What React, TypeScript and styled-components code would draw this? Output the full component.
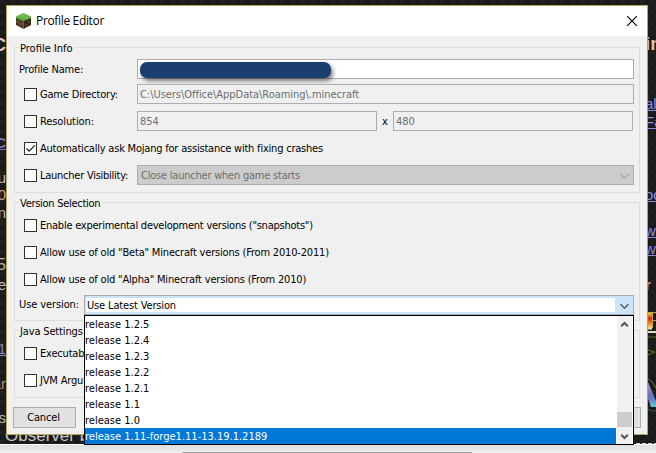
import React from "react";
import styled, { createGlobalStyle, css } from "styled-components";

const Global = createGlobalStyle`
  *, *::before, *::after { box-sizing: border-box; }
  body { margin: 0; overflow: hidden; }
`;

const Desktop = styled.div`
  position: relative;
  width: 656px;
  height: 453px;
  overflow: hidden;
  padding: 5px 8px 0 6px;
  background-color: #1c1c1c;
  background-image: conic-gradient(#191919 25%, #1f1f1f 0 50%, #191919 0 75%, #1f1f1f 0);
  background-size: 10px 10px;
  font: 11px/16px "DejaVu Sans Condensed", "DejaVu Sans", sans-serif;
  font-stretch: condensed;
  color: #000;
`;

/* Fragments of the web page that show around the dialog */
const PageText = styled.span<{ $y: number; $right?: boolean; $color: string; $bold?: boolean; $size?: number; $link?: boolean }>`
  position: absolute;
  top: ${(p) => p.$y}px;
  ${(p) => (p.$right ? "left: 645px;" : "right: 650px;")}
  transform: translateY(-50%);
  color: ${(p) => p.$color};
  font: ${(p) => (p.$bold ? "bold" : "normal")} ${(p) => p.$size ?? 15}px/20px "Liberation Sans", sans-serif;
  white-space: nowrap;
  ${(p) => p.$link && css`text-decoration: underline;`}
`;

const BottomText = styled.span<{ $x: number }>`
  position: absolute;
  left: ${(p) => p.$x}px;
  top: 426px;
  color: #c8c8c8;
  font: 17px/20px "Liberation Sans", sans-serif;
  white-space: nowrap;
`;

const PageArt = styled.svg`
  position: absolute;
  left: 646px;
  top: 308px;
`;

const PageDashes = styled.div`
  position: absolute;
  left: 636px;
  right: 0;
  top: 443px;
  height: 1px;
  background: repeating-linear-gradient(90deg, #d8d0c8 0 4px, #333 4px 6px);
`;

const Footer = styled.div`
  position: absolute;
  left: 0;
  right: 0;
  top: 444px;
  height: 9px;
  background: linear-gradient(#fff 0 1px, #dedede 1px, #f0f0f0 9px);
`;

const FooterTrack = styled.div`
  width: 290px;
  height: 1px;
  margin: 8px 0 0 182px;
  background: #a0a0a0;
`;

const Dialog = styled.main`
  position: relative;
  width: 642px;
  height: 430px;
  border: 1px solid #b5a55e;
  background: #f0f0f0;
`;

const TitleBar = styled.header`
  display: flex;
  align-items: center;
  height: 30px;
  padding: 0 10px 0 9px;
  background: #fff;
`;

const Title = styled.h1`
  flex: 1;
  margin: 0 0 0 5px;
  font: 12px/16px "Open Sans", "Noto Sans", sans-serif;
  letter-spacing: -0.34px;
`;

const Content = styled.div`
  display: flex;
  flex-direction: column;
  padding: 11px 7px 0;
`;

const Group = styled.section<{ $height: number; $inset?: number }>`
  position: relative;
  height: ${(p) => p.$height}px;
  margin-bottom: 9px;
  padding: ${(p) => p.$inset ?? 9}px 4px 0;
  border: 1px solid #dcdcdc;
`;

const Legend = styled.h2<{ $spacing?: number }>`
  position: absolute;
  left: 4px;
  top: -8px;
  margin: 0;
  padding: 0 3px 0 1px;
  background: #f0f0f0;
  font: inherit;
  line-height: 18px;
  letter-spacing: ${(p) => p.$spacing ?? 0}px;
  white-space: nowrap;
`;

const Row = styled.div<{ $height?: number; $indent?: boolean }>`
  display: flex;
  align-items: center;
  height: ${(p) => p.$height ?? 27}px;
  padding-left: ${(p) => (p.$indent ? 5 : 0)}px;
`;

const Label = styled.span<{ $spacing?: number; $width?: number }>`
  flex: none;
  width: ${(p) => (p.$width ? `${p.$width}px` : "auto")};
  letter-spacing: ${(p) => p.$spacing ?? 0}px;
  white-space: nowrap;
`;

const RowLabel = styled(Label)`
  line-height: 18px;
`;

const Box = styled.span`
  display: flex;
  flex: none;
  width: 13px;
  height: 13px;
  margin-right: 3px;
  border: 1px solid #333;
  background: #fff;
`;

const Field = styled.div<{ $width: number; $active?: boolean; $spacing?: number }>`
  display: flex;
  flex: none;
  align-items: center;
  width: ${(p) => p.$width}px;
  height: 20px;
  margin-bottom: 1px;
  padding: 2px 0 0 2px;
  border: 1px solid #abadb3;
  background: ${(p) => (p.$active ? "#fff" : "#f0f0f0")};
  color: #6d6d6d;
  letter-spacing: ${(p) => p.$spacing ?? 0}px;
`;

const Redaction = styled.span`
  width: 191px;
  height: 16px;
  margin: -1px 0 0 -0.5px;
  border-radius: 7px;
  background: #1b3e70;
  box-shadow: 2px 3px 4px rgba(0, 0, 0, 0.5);
`;

const Times = styled.span`
  width: 16px;
  padding-left: 5px;
`;

const DisabledSelect = styled(Field)`
  justify-content: space-between;
  padding: 2px 4px 0 3px;
  background: #ccc;
`;

const Combo = styled.div`
  display: flex;
  flex: none;
  width: 550px;
  height: 20px;
  border: 1px solid #a8adb4;
  background: #cce4f7;
`;

const ComboValue = styled.span`
  width: 529px;
  height: 14px;
  margin: 2px 0 0 1px;
  padding-left: 1px;
  background: #fff;
  line-height: 15px;
  letter-spacing: -0.15px;
`;

const ComboArrow = styled.span`
  display: flex;
  flex: 1;
  align-items: center;
  justify-content: center;
  padding: 2px 0 0 1px;
`;

const Popup = styled.div`
  position: absolute;
  left: 84px;
  top: 315px;
  display: flex;
  width: 550px;
  height: 130px;
  border: 1px solid #000;
  background: #fff;
`;

const Options = styled.ul`
  flex: 1;
  margin: 0;
  padding: 0;
  list-style: none;
`;

const Option = styled.li<{ $selected: boolean }>`
  height: 16px;
  line-height: 17px;
  background: ${(p) => (p.$selected ? "#0078d7" : "#fff")};
  color: ${(p) => (p.$selected ? "#fff" : "#000")};
`;

const Scrollbar = styled.div`
  display: flex;
  flex-direction: column;
  align-items: center;
  width: 15px;
  margin: 0 1px;
  padding: 5px 0 4px;
  background: #f0f0f0;
`;

const Thumb = styled.div`
  width: 15px;
  height: 15px;
  margin: auto 0 6px;
  background: #cdcdcd;
`;

const Buttons = styled.footer`
  display: flex;
  justify-content: space-between;
  margin: 0 -1px;
`;

const Button = styled.button`
  width: 63px;
  height: 21px;
  padding: 0 2px 0 0;
  border: 1px solid #adadad;
  background: #e1e1e1;
  color: #000;
  font: inherit;
  letter-spacing: -0.15px;
`;

const Chevron = ({ color, up, thick }: { color: string; up?: boolean; thick?: boolean }) => (
  <svg width="9" height="7" viewBox="0 0 9 7" fill="none" stroke={color} strokeWidth={thick ? 2 : 1.2}>
    <path d={up ? "M1.2 5.3 4.5 2l3.3 3.3" : thick ? "M1.2 1.7 4.5 5l3.3-3.3" : "M.5 1.2 4.5 5.2l4-4"} />
  </svg>
);

const GrassBlock = () => (
  <svg width="15" height="16" viewBox="0 0 15 16">
    <path fill="#503725" d="M0 4v8l7.5 4V7z" />
    <path fill="#36251a" d="M15 4v8l-7.5 4V7z" />
    <path fill="#67b045" d="M0 3.6 7.5 0 15 3.6v1.2L7.5 8 0 4.8z" />
    <path fill="#4b8430" d="M0 4.4v1.4l2 .3v.6l2-.1v1l2-.4 1.5 1V7.5zM15 4.4v1.2l-2 .5v.6l-2-.1v1l-2-.4-1.5.8V7.5z" />
    <path fill="#80c35d" d="m4 3 3-1.4 2 1L6 4zM8 5l3-1.4 1.5.7-3 1.3z" />
    <path fill="#775138" d="M1 8h2v2H1zM4 10h2v2H4z" />
    <path fill="#593d2a" d="M9 11h2v2H9zM12 8h2v2h-2z" />
  </svg>
);

type CheckProps = { text: string; spacing?: number; width?: number; checked?: boolean; children?: React.ReactNode };
const CheckRow = ({ text, spacing, width, checked, children }: CheckProps) => (
  <Row $indent>
    <Box>
      {checked && (
        <svg width="11" height="11" viewBox="0 0 11 11" fill="none" stroke="#222" strokeWidth="1.2">
          <path d="M1.5 5.5 4.2 8.2 9.8 2.4" />
        </svg>
      )}
    </Box>
    <Label $spacing={spacing} $width={width}>{text}</Label>
    {children}
  </Row>
);

const versions = ["1.2.5", "1.2.4", "1.2.3", "1.2.2", "1.2.1", "1.1", "1.0", "1.11-forge1.11-13.19.1.2189"];

const leftText = [
  { t: "C", y: 45, c: "#dac6c1", b: true, s: 18 },
  { t: "C", y: 143, c: "#7772c4", b: true, l: true },
  { t: "u", y: 178, c: "#a9b9d0" },
  { t: "0", y: 195, c: "#c9a17e" },
  { t: "n", y: 213, c: "#aab4cc" },
  { t: "15", y: 265, c: "#c4b49d", s: 16 },
  { t: "e", y: 285, c: "#bfbfc6" },
  { t: "1.1", y: 349, c: "#8288d8", l: true },
  { t: "ar", y: 384, c: "#ad8a7a" },
  { t: "s", y: 418, c: "#b5b5bc" },
];
const rightText = [
  { t: "in", y: 44, c: "#d5c2b4", b: true, s: 19 },
  { t: "al", y: 104, c: "#8d8bdd", l: true },
  { t: "Fa", y: 122, c: "#8d8bdd", l: true },
  { t: "oo", y: 195, c: "#8d8bdd", l: true },
  { t: "wi", y: 231, c: "#8d8bdd", l: true },
  { t: "w", y: 249, c: "#8d8bdd", l: true },
  { t: "r", y: 285, c: "#d1aa8c", b: true },
];

export default function App() {
  return (
    <Desktop>
      <Global />
      {leftText.map((f) => (
        <PageText key={f.y} $y={f.y} $color={f.c} $bold={f.b} $size={f.s} $link={f.l}>{f.t}</PageText>
      ))}
      {rightText.map((f) => (
        <PageText key={f.y} $right $y={f.y} $color={f.c} $bold={f.b} $size={f.s} $link={f.l}>{f.t}</PageText>
      ))}
      <BottomText $x={5}>Observer b</BottomText>
      <PageArt width="10" height="110" viewBox="0 0 10 110">
        <defs>
          <linearGradient id="gold" x1="0" y1="0" x2="0" y2="1">
            <stop stopColor="#f6d33c" /><stop offset=".35" stopColor="#d52a16" /><stop offset=".7" stopColor="#ee9b22" /><stop offset="1" stopColor="#f7e9a0" />
          </linearGradient>
          <linearGradient id="sky" x1="0" y1="0" x2="0" y2="1">
            <stop stopColor="#a69ab8" /><stop offset=".6" stopColor="#6570bd" /><stop offset="1" stopColor="#6bc4cd" />
          </linearGradient>
        </defs>
        <path fill="url(#gold)" d="M0 4.5h6v17H0z" />
        <path fill="none" stroke="#c9a23a" d="M0 4.5h10M6.5 5v15M7 12.5h3" />
        <path fill="none" stroke="#e6dfb8" strokeWidth="2" d="M0 24h10" />
        <path fill="none" stroke="#7a6226" d="M0 29h10M2 42l7 2-7 3" />
        <path fill="url(#sky)" d="M1 74h1l8 19v6H5L1 88z" />
        <path fill="none" stroke="#846e50" d="M1 71q4 0 9 9" />
        <path fill="none" stroke="#356070" d="M1 101q3 2 9 2" />
      </PageArt>
      <PageDashes />
      <Dialog>
        <TitleBar>
          <GrassBlock />
          <Title>Profile Editor</Title>
          <svg width="10" height="10" viewBox="0 0 10 10" stroke="#000" strokeWidth="1.15"><path d="m0 0 10 10M10 0 0 10" /></svg>
        </TitleBar>
        <Content>
          <Group $height={146} $inset={11}>
            <Legend>Profile Info</Legend>
            <Row $height={21}>
              <RowLabel $spacing={-0.18} $width={118}>Profile Name:</RowLabel>
              <Field $width={497} $active><Redaction /></Field>
            </Row>
            <Row $height={1} />
            <CheckRow text="Game Directory:" spacing={-0.18} width={97}>
              <Field $width={497} $spacing={-0.04}>C:\Users\Office\AppData\Roaming\.minecraft</Field>
            </CheckRow>
            <CheckRow text="Resolution:" spacing={-0.1} width={97}>
              <Field $width={240}>854</Field>
              <Times>x</Times>
              <Field $width={240}>480</Field>
            </CheckRow>
            <CheckRow text="Automatically ask Mojang for assistance with fixing crashes" spacing={-0.21} checked />
            <CheckRow text="Launcher Visibility:" spacing={-0.25} width={97}>
              <DisabledSelect $width={497} $spacing={-0.22}>Close launcher when game starts<Chevron color="#a3a3a3" /></DisabledSelect>
            </CheckRow>
          </Group>
          <Group $height={119}>
            <Legend $spacing={-0.28}>Version Selection</Legend>
            <CheckRow text={'Enable experimental development versions ("snapshots")'} spacing={-0.24} />
            <CheckRow text={'Allow use of old "Beta" Minecraft versions (From 2010-2011)'} spacing={-0.18} />
            <CheckRow text={'Allow use of old "Alpha" Minecraft versions (From 2010)'} spacing={-0.18} />
            <Row $height={24}>
              <RowLabel $spacing={-0.1} $width={65}>Use version:</RowLabel>
              <Combo>
                <ComboValue>Use Latest Version</ComboValue>
                <ComboArrow><Chevron color="#444" /></ComboArrow>
              </Combo>
            </Row>
          </Group>
          <Group $height={68}>
            <Legend $spacing={-0.15}>Java Settings</Legend>
            <CheckRow text="Executab" spacing={-0.18} />
            <CheckRow text="JVM Argu" spacing={-0.18} />
          </Group>
          <Buttons>
            <Button>Cancel</Button>
            <Button aria-label="Save" />
          </Buttons>
        </Content>
      </Dialog>
      <Footer><FooterTrack /></Footer>
      <Popup>
        <Options>
          {versions.map((v, i) => (
            <Option key={v} $selected={i === versions.length - 1}>release {v}</Option>
          ))}
        </Options>
        <Scrollbar>
          <Chevron color="#555" up thick />
          <Thumb />
          <Chevron color="#555" thick />
        </Scrollbar>
      </Popup>
    </Desktop>
  );
}
